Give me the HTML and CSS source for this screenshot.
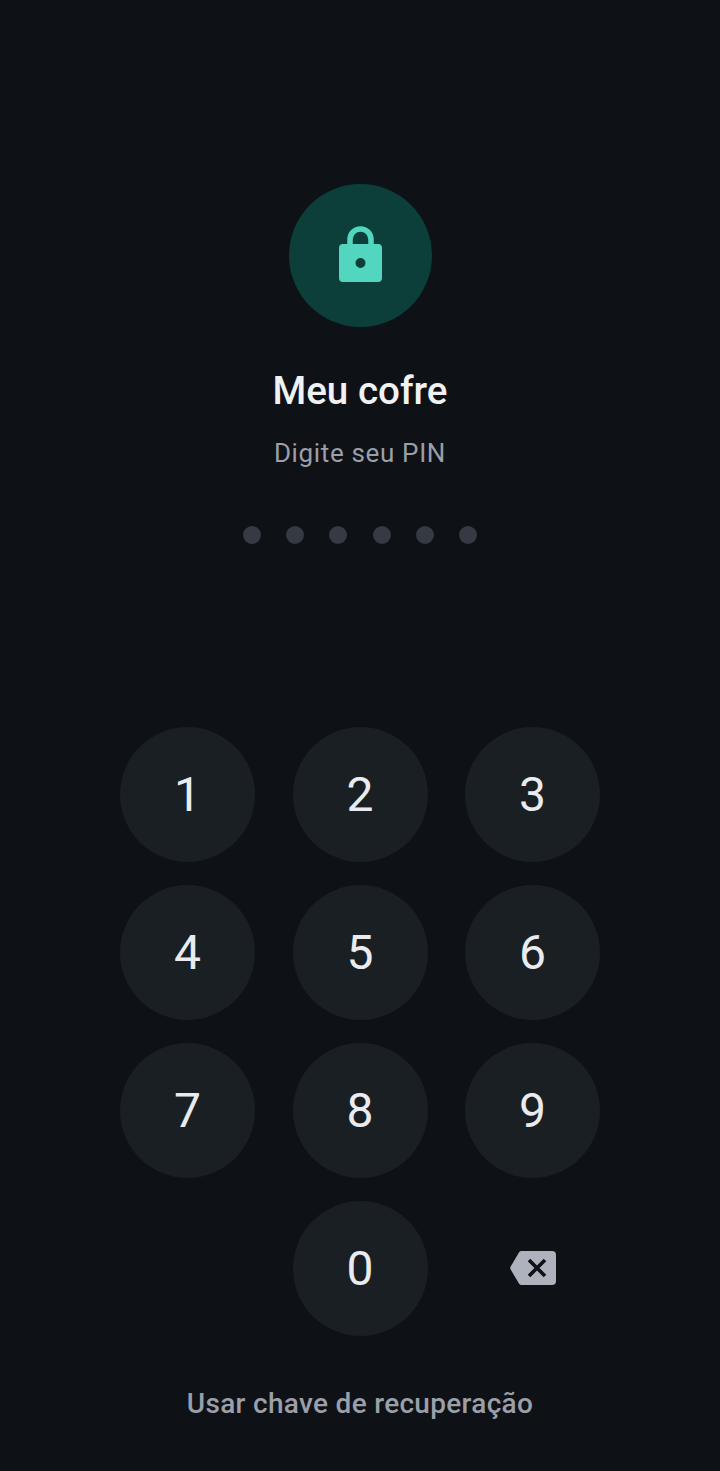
FILE: index.html
```html
<!DOCTYPE html>
<html lang="pt-BR">
<head>
  <meta charset="UTF-8">
  <meta name="viewport" content="width=device-width, initial-scale=1.0">
  <title>Meu cofre</title>
  <link rel="stylesheet" href="styles.css">
</head>
<body>

<main class="screen">
  <div class="lock-badge">
    <svg class="lock-icon" width="43" height="56" viewBox="0 0 43 56">
      <path d="M11 22V13.5C11 7.5 15.500 3 21.500 3S32 7.500 32 13.500V22" fill="none" stroke="#52d6c0" stroke-width="5.5"/>
      <path fill-rule="evenodd" fill="#52d6c0" d="M4 18h35a4 4 0 0 1 4 4v30a4 4 0 0 1-4 4H4a4 4 0 0 1-4-4V22a4 4 0 0 1 4-4zM21.500 32a5 5 0 1 0 0 10a5 5 0 0 0 0-10z"/>
    </svg>
  </div>

  <h1 class="title">Meu cofre</h1>
  <p class="subtitle">Digite seu PIN</p>

  <div class="pin-dots">
    <span class="dot"></span>
    <span class="dot"></span>
    <span class="dot"></span>
    <span class="dot"></span>
    <span class="dot"></span>
    <span class="dot"></span>
  </div>

  <div class="keypad">
    <button class="key">1</button>
    <button class="key">2</button>
    <button class="key">3</button>
    <button class="key">4</button>
    <button class="key">5</button>
    <button class="key">6</button>
    <button class="key">7</button>
    <button class="key">8</button>
    <button class="key">9</button>
    <span></span>
    <button class="key">0</button>
    <button class="key key-erase" aria-label="Apagar">
      <svg width="46" height="34" viewBox="0 0 46 34">
        <path fill="#adb2bd" d="M11.5 0H42a4 4 0 0 1 4 4v26a4 4 0 0 1-4 4H11.5a3 3 0 0 1-2.4-1.2L.7 18.6a3 3 0 0 1 0-3.2L9.1 1.2A3 3 0 0 1 11.5 0z"/>
        <path fill="none" stroke="#0e1116" stroke-width="3.6" d="M19 9l16 16M35 9L19 25"/>
      </svg>
    </button>
  </div>

  <a class="recovery" href="#recovery">Usar chave de recuperação</a>
</main>

</body>
</html>
```

FILE: styles.css
```css
html, body {
  margin: 0;
  padding: 0;
  background: #0e1116;
}

.screen {
  box-sizing: border-box;
  height: 1471px;
  padding-top: 184px;
  display: flex;
  flex-direction: column;
  align-items: center;
  font-family: Roboto, "Noto Sans", sans-serif;
  overflow: hidden;
}

.lock-badge {
  box-sizing: border-box;
  width: 143px;
  height: 143px;
  padding-bottom: 3px;
  border-radius: 50%;
  background: #0c3f39;
  display: flex;
  align-items: center;
  justify-content: center;
}

.lock-icon {
  display: block;
}

.title {
  margin: 43px 0 0;
  font-size: 38.6px;
  line-height: 42px;
  font-weight: 500;
  color: #eff1f3;
}

.subtitle {
  margin: 26px 0 0;
  font-size: 26px;
  line-height: 30px;
  letter-spacing: 0.65px;
  color: #9a9fa8;
}

.pin-dots {
  display: flex;
  gap: 25.4px;
  margin-top: 58px;
}

.dot {
  width: 18px;
  height: 18px;
  border-radius: 50%;
  background: #353a43;
}

.keypad {
  display: grid;
  grid-template-columns: repeat(3, 135px);
  grid-auto-rows: 135px;
  column-gap: 37.5px;
  row-gap: 23px;
  margin-top: 183px;
}

.key {
  border: none;
  padding: 0;
  border-radius: 50%;
  background: #1a1f24;
  color: #e9ebee;
  font-family: inherit;
  font-size: 48px;
  font-weight: 400;
  display: flex;
  align-items: center;
  justify-content: center;
}

.key-erase {
  padding: 0 0 2px 1px;
  background: none;
}

.recovery {
  margin-top: 52px;
  font-size: 28px;
  line-height: 32px;
  letter-spacing: 0.3px;
  font-weight: 500;
  color: #9a9fa8;
  text-decoration: none;
}
```
